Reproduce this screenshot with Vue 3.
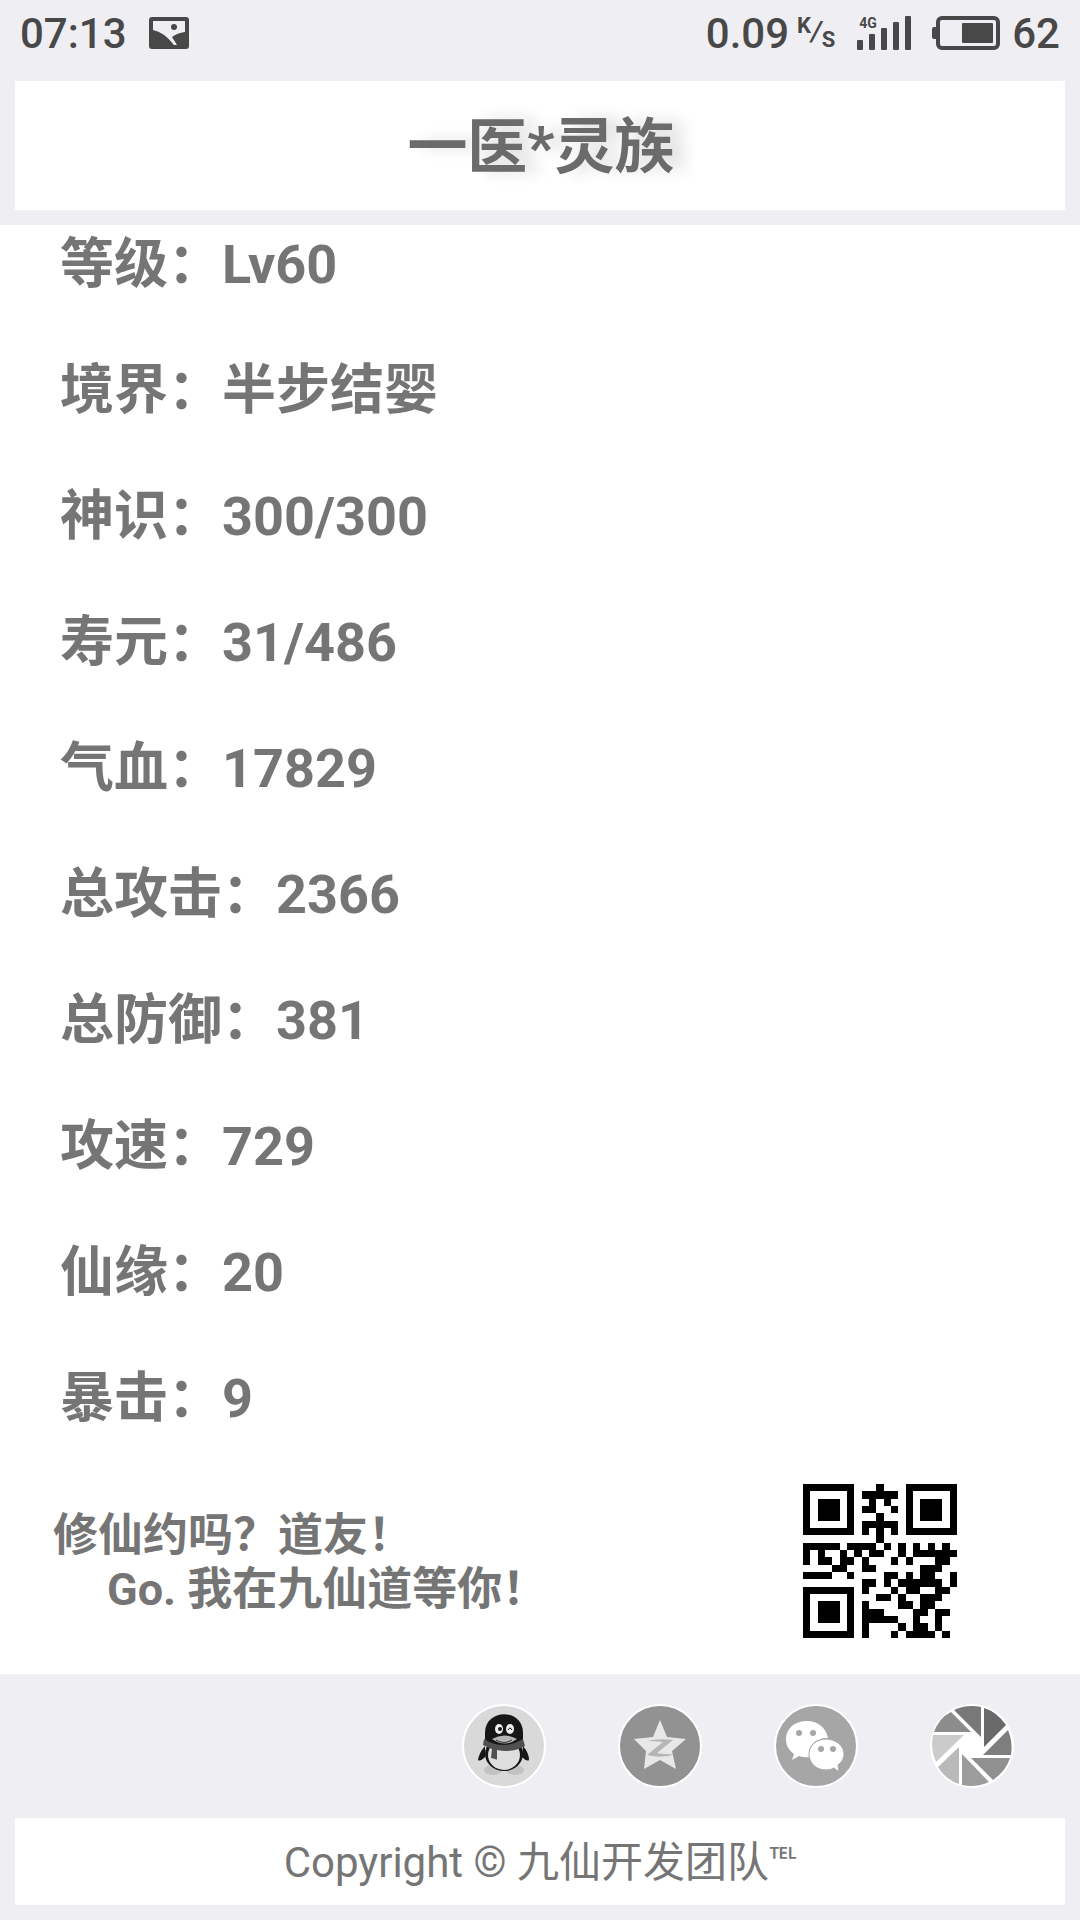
<template>
  <div class="page">
    <!-- Status bar -->
    <header class="status-bar">
      <div class="status-group">
        <span>07:13</span>
        <svg class="photo-icon" viewBox="0 0 40 32">
          <path fill="#484848" fill-rule="evenodd" d="M3 0H37Q40 0 40 3V29Q40 32 37 32H3Q0 32 0 29V3Q0 0 3 0ZM4 4V13Q15 15 25 28H28L23 20Q28 16 36 15V4Z" />
          <circle cx="25" cy="10" r="3" fill="#484848" />
        </svg>
      </div>
      <div class="status-group">
        <span>0.09</span>
        <span class="speed-unit"><sup>K</sup><i>/</i><sub>S</sub></span>
        <div class="signal">
          <span class="network">4G</span>
          <svg viewBox="0 0 54 34" fill="#484848">
            <rect v-for="n in 5" :key="n" :x="(n - 1) * 12" :y="30 - n * 6" width="6" :height="4 + n * 6" rx="1" />
          </svg>
        </div>
        <svg class="battery-icon" viewBox="0 0 68 34" fill="#484848">
          <rect x="6" y="2" width="60" height="30" rx="4" fill="none" stroke="#484848" stroke-width="4" />
          <path d="M4 11H2Q0 11 0 13V21Q0 23 2 23H4Z" />
          <rect x="30" y="7" width="31" height="20" rx="1" />
        </svg>
        <span>62</span>
      </div>
    </header>

    <!-- Title -->
    <div class="title-card">
      <h1>一医*灵族</h1>
    </div>

    <!-- Character stats -->
    <main class="content">
      <dl class="stats">
        <div v-for="stat in stats" :key="stat.label" class="stat-row">
          <dt>{{ stat.label }}：</dt>
          <dd>{{ stat.value }}</dd>
        </div>
      </dl>
      <div class="invite">
        <p>修仙约吗？道友！<br /><span class="invite-second">Go. 我在九仙道等你！</span></p>
        <svg class="qr-code" viewBox="0 0 21 21" shape-rendering="crispEdges">
          <path :d="qrPath" />
        </svg>
      </div>
    </main>

    <!-- Share buttons -->
    <nav class="share-bar">
      <button type="button" aria-label="QQ">
        <svg viewBox="0 0 84 84">
          <circle cx="42" cy="42" r="41" fill="#d9d9d9" stroke="#fff" stroke-width="2" />
          <ellipse cx="31" cy="66" rx="9" ry="5" fill="#c2c2c2" />
          <ellipse cx="53" cy="66" rx="9" ry="5" fill="#c2c2c2" />
          <path d="M23 42Q17 49 16 56Q18 58 23 53ZM61 42Q67 49 67 56Q65 58 60 53Z" fill="#161616" />
          <ellipse cx="42" cy="50" rx="19" ry="17" fill="#161616" />
          <ellipse cx="42" cy="51" rx="16" ry="15" fill="#dedede" />
          <path d="M23 35V29C23 4 61 4 61 29V35Q59 43 42 44Q25 43 23 35Z" fill="#161616" />
          <path d="M22 35Q41 47 61 35L63 42Q51 49 35 46V55Q35 56 33 55L29 54L30 45L21 41Z" fill="#505050" />
          <ellipse cx="37" cy="25" rx="4" ry="5" fill="#eee" />
          <ellipse cx="48" cy="25" rx="4" ry="5" fill="#eee" />
          <circle cx="38" cy="25" r="2" fill="#161616" />
          <path d="M46 26Q48 22 50 26" fill="none" stroke="#161616" stroke-width="1" />
          <path d="M30 35Q42 28 55 35Q43 44 30 35Z" fill="#b5b5b5" />
          <path d="M34 36Q42 41 50 36" fill="none" stroke="#303030" stroke-width="1" />
        </svg>
      </button>
      <button type="button" aria-label="QQ空间">
        <svg viewBox="0 0 84 84">
          <circle cx="42" cy="42" r="41" fill="#929292" stroke="#fff" stroke-width="2" />
          <path d="M42 16L49 33L68 35L54 47L58 65L42 56L26 65L28 47L16 35L35 33Z" fill="#e8e8e8" />
          <path d="M29 37Q42 34 55 36L39 49Q49 51 57 50Q44 55 29 51L45 38Q37 37 29 37Z" fill="#b5b5b5" />
        </svg>
      </button>
      <button type="button" aria-label="微信">
        <svg viewBox="0 0 84 84">
          <circle cx="42" cy="42" r="41" fill="#a6a6a6" stroke="#fff" stroke-width="2" />
          <path d="M33 17C20 17 12 25 12 35C12 42 15 46 20 50L18 56L25 52Q30 54 36 53C32 42 42 34 54 34C52 23 43 17 33 17Z" fill="#fff" />
          <path d="M52 35C42 35 35 42 35 50C35 59 42 66 52 66Q57 66 60 64L65 68L64 61C68 58 70 54 70 50C70 42 62 35 52 35Z" fill="#fff" stroke="#a6a6a6" stroke-width="1" />
          <circle cx="25" cy="29" r="3" fill="#a6a6a6" />
          <circle cx="39" cy="29" r="3" fill="#a6a6a6" />
          <circle cx="47" cy="45" r="3" fill="#a6a6a6" />
          <circle cx="59" cy="45" r="3" fill="#a6a6a6" />
        </svg>
      </button>
      <button type="button" aria-label="朋友圈">
        <svg viewBox="0 0 84 84">
          <circle cx="42" cy="42" r="42" fill="#fff" />
          <path d="M54 4Q67 8 76 21L54 43Z" fill="#696969" />
          <path d="M78 26Q83 38 81 51H53Z" fill="#7e7e7e" />
          <path d="M80 54Q76 67 63 76L41 54Z" fill="#909090" />
          <path d="M59 78Q46 84 32 81V50Z" fill="#9c9c9c" />
          <path d="M29 80Q16 76 8 63L29 43Z" fill="#b9b9b9" />
          <path d="M6 58Q0 45 3 31H34Z" fill="#cbcbcb" />
          <path d="M4 28Q9 14 21 8L41 28Z" fill="#8c8c8c" />
          <path d="M24 6Q37 0 51 3V33Z" fill="#787878" />
        </svg>
      </button>
    </nav>

    <footer class="copyright">
      <p>Copyright © 九仙开发团队<span class="tel">℡</span></p>
    </footer>
  </div>
</template>

<script setup>
const stats = [
  { label: '等级', value: 'Lv60' },
  { label: '境界', value: '半步结婴' },
  { label: '神识', value: '300/300' },
  { label: '寿元', value: '31/486' },
  { label: '气血', value: '17829' },
  { label: '总攻击', value: '2366' },
  { label: '总防御', value: '381' },
  { label: '攻速', value: '729' },
  { label: '仙缘', value: '20' },
  { label: '暴击', value: '9' }
];

// QR modules, one string per row
const qrRows = [
  '#######...#...#######',
  '#.....#.#####.#.....#',
  '#.###.#..#.#..#.###.#',
  '#.###.#.##..#.#.###.#',
  '#.###.#...#...#.###.#',
  '#.....#.#####.#.....#',
  '#######.#.#.#.#######',
  '..........#..........',
  '#####.####.#.#.#.#.#.',
  '#.#..#.#.##..#.######',
  '#.##.##.#...#.#...##.',
  '....##..##......###..',
  '####..#....##.#.##..#',
  '........##.#.######.#',
  '#######.#...#.##..##.',
  '#.....#...##.#..###..',
  '#.###.#.#....##.##...',
  '#.###.#.###....##.##.',
  '#.###.#.#####..#..#..',
  '#.....#.#....#.##.#..',
  '#######.#...#.####.#.'
];

const qrPath = qrRows
  .map((row, y) => [...row].map((cell, x) => (cell === '#' ? `M${x} ${y}h1v1h-1z` : '')).join(''))
  .join('');
</script>

<style>
body {
  background-color: #efeef3;
}
</style>

<style scoped>
.page {
  min-height: 100vh;
  display: flex;
  flex-direction: column;
  color: #757575;
  background-color: #efeef3;
  font-family: Roboto, "Noto Sans CJK SC", sans-serif;
}

.status-bar {
  display: flex;
  justify-content: space-between;
  height: 66px;
  margin-bottom: 15px;
  padding: 0 20px;
  color: #484848;
  font-size: 42px;
  font-weight: 500;
}

.status-group {
  display: flex;
  align-items: center;
}

.photo-icon {
  width: 40px;
  height: 32px;
  margin-left: 22px;
}

.speed-unit {
  display: flex;
  height: 34px;
  margin-left: 8px;
}

.speed-unit sup,
.speed-unit sub {
  font-size: 22px;
  font-weight: 700;
  line-height: 20px;
}

.speed-unit i {
  font-size: 28px;
  line-height: 32px;
}

.speed-unit sub {
  align-self: flex-end;
}

.signal {
  position: relative;
  width: 54px;
  height: 34px;
  margin-left: 22px;
}

.signal svg {
  display: block;
}

.network {
  position: absolute;
  top: 0;
  left: 2px;
  font-size: 14px;
  font-weight: 700;
  line-height: 14px;
}

.battery-icon {
  width: 68px;
  height: 34px;
  margin: 0 12px 0 21px;
}

.title-card {
  margin: 0 15px 15px;
  padding: 26px 0 22px 2px;
  background-color: #fff;
  text-align: center;
}

h1 {
  margin: 0;
  color: #6b6b6b;
  font-size: 60px;
  font-weight: 700;
  line-height: 81px;
  text-shadow: 14px 0 15px #ddd;
}

.content {
  flex: 1;
  padding-top: 1px;
  background-color: #fff;
}

.stats {
  margin: 0;
  padding: 0 60px;
  font-size: 54px;
  font-weight: 700;
}

.stat-row {
  display: flex;
  height: 78px;
  margin-bottom: 48px;
  line-height: 78px;
}

.stat-row:last-child {
  margin-bottom: 46px;
}

.stat-row dd {
  margin: 0;
}

.invite {
  display: flex;
  justify-content: space-between;
  padding: 0 123px 36px 53px;
}

.invite p {
  margin: 25px 0 0;
  font-size: 45px;
  font-weight: 700;
  line-height: 54px;
}

.invite-second {
  padding-left: 54px;
}

.qr-code {
  width: 154px;
  height: 154px;
}

.share-bar {
  display: flex;
  justify-content: flex-end;
  gap: 72px;
  padding: 30px 66px;
}

.share-bar button {
  width: 84px;
  height: 84px;
  padding: 0;
  border: none;
  background: none;
  cursor: pointer;
}

.share-bar svg {
  display: block;
}

.copyright {
  margin: 0 15px 15px;
  padding: 15px 0 13px;
  background-color: #fff;
  text-align: center;
}

.copyright p {
  margin: 0;
  font-size: 42px;
  line-height: 59px;
}

.tel {
  font-family: "Noto Sans", "DejaVu Sans", sans-serif;
  font-size: 34px;
  line-height: 1;
  vertical-align: 6px;
}
</style>
